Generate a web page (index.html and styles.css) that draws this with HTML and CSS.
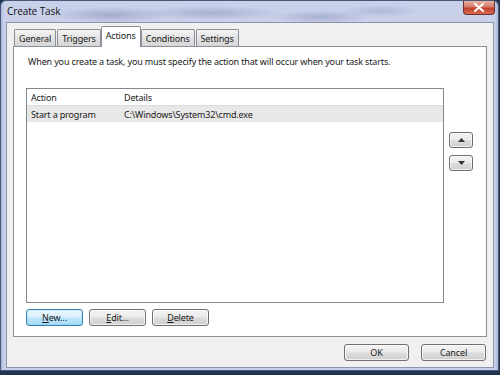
FILE: index.html
```html
<!DOCTYPE html>
<html>
<head>
<meta charset="utf-8">
<link rel="stylesheet" href="styles.css">
</head>
<body>
<div class="window">
  <div class="titlebar">
    <span class="title">Create Task</span>
    <div class="close">
      <svg width="12" height="9" viewBox="0 0 12 9"><path d="M2 1 L10 8 M10 1 L2 8" stroke="#fff" stroke-width="2.2" stroke-linecap="round"/></svg>
    </div>
  </div>
  <div class="client">
    <div class="tabs">
      <div class="tab">General</div>
      <div class="tab">Triggers</div>
      <div class="tab active">Actions</div>
      <div class="tab">Conditions</div>
      <div class="tab">Settings</div>
    </div>
    <div class="panel">
      <p class="desc">When you create a task, you must specify the action that will occur when your task starts.</p>
      <div class="listarea">
        <div class="list">
          <div class="row head"><span class="c1">Action</span><span class="c2">Details</span></div>
          <div class="row sel"><span class="c1">Start a program</span><span class="c2">C:\Windows\System32\cmd.exe</span></div>
        </div>
        <div class="arrows">
          <button class="btn arrow"><svg width="7" height="4" viewBox="0 0 7 4"><path d="M0 4 L3.5 0 L7 4 Z" fill="#333"/></svg></button>
          <button class="btn arrow"><svg width="7" height="4" viewBox="0 0 7 4"><path d="M0 0 L3.5 4 L7 0 Z" fill="#333"/></svg></button>
        </div>
      </div>
      <div class="actions">
        <button class="btn small default"><u>N</u>ew...</button>
        <button class="btn small"><u>E</u>dit...</button>
        <button class="btn small"><u>D</u>elete</button>
      </div>
    </div>
    <div class="footer">
      <button class="btn wide">OK</button>
      <button class="btn wide">Cancel</button>
    </div>
  </div>
</div>
</body>
</html>
```
FILE: styles.css
```css
* { box-sizing: border-box; }
html, body { margin: 0; padding: 0; }
body {
  width: 500px;
  height: 375px;
  background: #1d3550;
  font-family: "Noto Sans", "Open Sans", sans-serif;
  font-size: 9px;
  letter-spacing: -0.15px;
  color: #1a1a1a;
  overflow: hidden;
}
.window {
  width: 499px;
  height: 371px;
  border: 1px solid #4a5878;
  border-radius: 6px 6px 0 0;
  display: flex;
  flex-direction: column;
  background:
    radial-gradient(ellipse 60px 8px at 110px 14px, rgba(120,130,170,0.45), transparent),
    radial-gradient(ellipse 70px 7px at 210px 12px, rgba(120,130,170,0.4), transparent),
    radial-gradient(ellipse 50px 7px at 320px 16px, rgba(120,130,170,0.4), transparent),
    radial-gradient(ellipse 40px 6px at 380px 10px, rgba(120,130,170,0.3), transparent),
    linear-gradient(90deg, #aab6da 0px, #c9d0ea 3px, #c9d0ea 494px, #a9b4d6 497px);
}
.titlebar {
  height: 21px;
  display: flex;
  justify-content: space-between;
  align-items: flex-start;
}
.title {
  padding: 3px 0 0 6px;
  font-family: "Open Sans", "Noto Sans", sans-serif;
  font-size: 10px;
  letter-spacing: -0.1px;
  color: #111;
}
.close {
  width: 32px;
  height: 14px;
  margin-right: 3px;
  border: 1px solid #6e3030;
  border-top: none;
  border-radius: 0 0 4px 4px;
  background: linear-gradient(#eab3a6 0%, #d57a6a 45%, #c0402f 55%, #d86a4e 100%);
  display: flex;
  align-items: center;
  justify-content: center;
}
.client {
  flex: 1;
  margin: 0 4px 2px 5px;
  border: 1px solid #8d97ab;
  background: #f0f0f0;
  padding: 4px 6px 6px 6px;
  display: flex;
  flex-direction: column;
}
.tabs {
  display: flex;
  align-items: flex-end;
  height: 19px;
  margin-left: 1px;
  position: relative;
  z-index: 1;
}
.tab {
  height: 17px;
  padding: 2px 4px 0 4px;
  margin-right: 1px;
  border: 1px solid #8c8f98;
  border-bottom: none;
  border-radius: 2px 2px 0 0;
  background: linear-gradient(#f5f5f5, #e2e2e2 50%, #d6d6d6);
  line-height: 13px;
  white-space: nowrap;
}
.tab.active {
  height: 21px;
  margin-bottom: -1px;
  margin-left: -1px;
  margin-right: 0;
  padding: 2px 4px 0 4px;
  background: #fff;
}
.panel {
  height: 291px;
  border: 1px solid #8c8f98;
  background: #fff;
  padding: 9px 12px 11px 12px;
  display: flex;
  flex-direction: column;
}
.desc {
  margin: 0 0 20px 2px;
  line-height: 12px;
}
.listarea {
  display: flex;
  gap: 5px;
}
.list {
  width: 418px;
  height: 215px;
  border: 1px solid #828790;
  background: #fff;
}
.row {
  display: flex;
  height: 17px;
  align-items: center;
  padding-left: 4px;
}
.row.head {
  border-bottom: 1px solid #dcdcdc;
}
.row.sel {
  height: 16px;
  background: #e8e8e8;
}
.c1 { width: 93px; }
.arrows {
  display: flex;
  flex-direction: column;
  gap: 7px;
  padding-top: 44px;
}
.btn {
  font-family: inherit;
  font-size: 9px;
  letter-spacing: -0.15px;
  color: #1a1a1a;
  height: 17px;
  padding: 0;
  border: 1px solid #707070;
  border-radius: 3px;
  background: linear-gradient(#f3f3f3 0%, #ebebeb 48%, #dddddd 52%, #cfcfcf 100%);
  box-shadow: inset 0 0 0 1px rgba(255,255,255,0.7);
  display: flex;
  align-items: center;
  justify-content: center;
  line-height: 12px;
}
.btn.arrow { width: 24px; height: 16px; }
.actions {
  display: flex;
  gap: 6px;
  margin-top: 6px;
}
.btn.small { width: 57px; }
.btn.default {
  border-color: #3c7fb1;
  background: linear-gradient(#eaf6fd 0%, #d9f0fc 48%, #bee6fd 52%, #a7d9f5 100%);
  box-shadow: inset 0 0 0 1px #48d4fd33;
}
.footer {
  display: flex;
  justify-content: flex-end;
  gap: 12px;
  margin-top: 7px;
  padding-right: 1px;
}
.btn.wide { width: 65px; }
u { text-decoration: underline; }
```
